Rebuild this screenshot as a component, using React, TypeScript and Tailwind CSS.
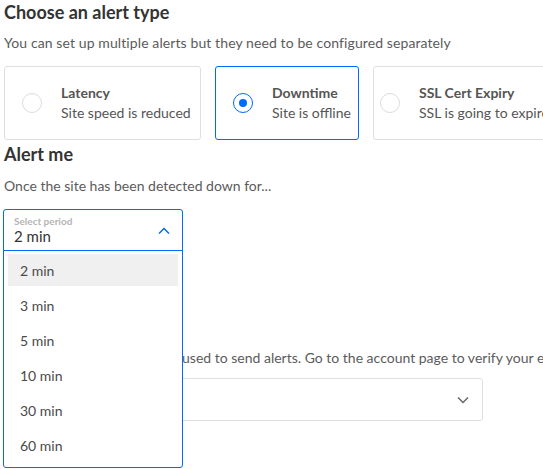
import React from "react";

const font = { fontFamily: "Lato, 'Open Sans', sans-serif" };

function Radio({ checked }: { checked?: boolean }) {
  if (checked) {
    return (
      <div className="w-[20px] h-[20px] shrink-0 rounded-full border-[1.5px] border-[#0069ff] flex items-center justify-center">
        <div className="w-[8px] h-[8px] rounded-full bg-[#0069ff]" />
      </div>
    );
  }
  return <div className="w-[20px] h-[20px] shrink-0 rounded-full border border-[#dcdcdc]" />;
}

function Card({
  title,
  sub,
  checked,
  cls,
}: {
  title: string;
  sub: string;
  checked?: boolean;
  cls: string;
}) {
  return (
    <div
      className={`${cls} h-[74px] shrink-0 flex items-center gap-[19px] rounded-[3px] border ${
        checked ? "border-[#0069ff]" : "border-[#dfdfdf]"
      }`}
    >
      <Radio checked={checked} />
      <div className="flex flex-col">
        <span className="text-[14px] leading-[20px] font-bold text-[#555]">{title}</span>
        <span className="text-[14px] leading-[20px] text-[#555]">{sub}</span>
      </div>
    </div>
  );
}

export default function App() {
  const items = ["2 min", "3 min", "5 min", "10 min", "30 min", "60 min"];
  return (
    <div className="relative w-[543px] h-[469px] overflow-hidden bg-white pl-[4px]" style={font}>
      <h1 className="text-[18px] font-bold leading-[24px] text-[#333]">Choose an alert type</h1>
      <p className="mt-[9px] text-[14px] leading-[20px] text-[#5b5b5b] whitespace-nowrap tracking-[0.1px]">
        You can set up multiple alerts but they need to be configured separately
      </p>
      <div className="mt-[13px] flex gap-[14px] whitespace-nowrap">
        <Card cls="w-[197px] pl-[17px]" title="Latency" sub="Site speed is reduced" />
        <Card cls="w-[144px] pl-[17px]" title="Downtime" sub="Site is offline" checked />
        <Card cls="w-[200px] pl-[6px]" title="SSL Cert Expiry" sub="SSL is going to expire soon" />
      </div>
      <h2 className="mt-[2px] text-[18px] font-bold leading-[24px] text-[#333]">Alert me</h2>
      <p className="mt-[10px] text-[14px] leading-[20px] text-[#5b5b5b]">Once the site has been detected down for...</p>

      <div className="relative mt-[13px] -ml-[1px] w-[180px]">
        <div className="h-[42px] border border-[#0069ff] rounded-t-[3px] flex items-center justify-between pl-[10px] pr-[12px]">
          <div className="flex flex-col">
            <span className="text-[10px] leading-[12px] font-bold text-[#b5b5b5]">Select period</span>
            <span className="text-[15px] leading-[18px] text-[#333]">2 min</span>
          </div>
          <svg width="12" height="8" viewBox="0 0 12 8" fill="none" className="mt-[2px]">
            <path d="M1 6.5L6 1.5L11 6.5" stroke="#0069ff" strokeWidth="1.5" />
          </svg>
        </div>
        <div className="absolute left-0 top-[41px] z-10 w-[180px] bg-white border border-[#0069ff] rounded-b-[3px] pt-[3px] pb-[6px] px-[4px] flex flex-col gap-[3px]">
          {items.map((it, i) => (
            <div
              key={it}
              className={`h-[32px] flex items-center pl-[12px] text-[14px] text-[#4a4a4a] ${i === 0 ? "bg-[#f0f0f0]" : ""}`}
            >
              {it}
            </div>
          ))}
        </div>
      </div>

      <h2 className="mt-[64px] text-[18px] font-bold leading-[24px] text-[#333]">Send alerts to</h2>
      <p className="mt-[9px] pl-[10px] text-[14px] leading-[20px] text-[#5b5b5b] whitespace-nowrap">
        Only verified emails can be used to send alerts. Go to the account page to verify your email.
      </p>
      <div className="mt-[10px] w-[479px] h-[43px] border border-[#dfdfdf] rounded-[3px] flex items-center justify-end pr-[13px]">
        <svg width="12" height="8" viewBox="0 0 12 8" fill="none">
          <path d="M1 1.5L6 6.5L11 1.5" stroke="#666" strokeWidth="1.5" />
        </svg>
      </div>
    </div>
  );
}
